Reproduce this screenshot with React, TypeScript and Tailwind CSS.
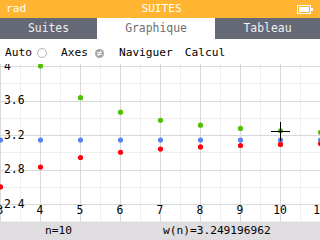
const MONO = { fontFamily: '"DejaVu Sans Mono", "Liberation Mono", monospace' }

const TOP = 64
const yOf = (v: number) => 135 - (v - 3.2) * 86.25 - TOP
const xOf = (n: number) => (n - 3) * 40

const NS = [3, 4, 5, 6, 7, 8, 9, 10, 11]

function Graph() {
  const minorX = [20, 60, 100, 140, 180, 220, 260, 300]
  const majorX = [0, 40, 80, 120, 160, 200, 240, 280, 320]
  const majorY = [4, 3.6, 3.2, 2.8, 2.4]
  const minorY = [3.8, 3.4, 3.0, 2.6, 2.2]
  return (
    <svg width={320} height={158} className="block" style={MONO}>
      {minorX.map((x) => (
        <line key={'mx' + x} x1={x + 0.5} x2={x + 0.5} y1={0} y2={158} stroke="#efefef" />
      ))}
      {minorY.map((v) => (
        <line key={'my' + v} x1={0} x2={320} y1={Math.round(yOf(v)) + 0.5} y2={Math.round(yOf(v)) + 0.5} stroke="#efefef" />
      ))}
      {majorX.map((x) => (
        <line key={'Mx' + x} x1={x + 0.5} x2={x + 0.5} y1={0} y2={158} stroke="#d9d9d9" />
      ))}
      {majorY.map((v) => (
        <line key={'My' + v} x1={0} x2={320} y1={Math.round(yOf(v)) + 0.5} y2={Math.round(yOf(v)) + 0.5} stroke="#d9d9d9" />
      ))}
      {majorY.map((v) => (
        <text key={'ly' + v} x={4} y={yOf(v)} dominantBaseline="middle" fontSize={11.4} fill="#000">
          {v === 4 ? '4' : v.toFixed(1)}
        </text>
      ))}
      {NS.map((n) => (
        <text key={'lx' + n} x={xOf(n)} y={146} dominantBaseline="middle" textAnchor="middle" fontSize={11.4} fill="#000">
          {n}
        </text>
      ))}
      {NS.map((n) => (
        <g key={'p' + n}>
          <circle cx={xOf(n) + 0.5} cy={yOf(n * Math.tan(Math.PI / n))} r={2.6} fill="#50c102" />
          <circle cx={xOf(n) + 0.5} cy={yOf(Math.PI)} r={2.6} fill="#5b82f2" />
          <circle cx={xOf(n) + 0.5} cy={yOf(n * Math.sin(Math.PI / n))} r={2.6} fill="#ff000c" />
        </g>
      ))}
      {/* cursor */}
      <line x1={271} x2={290} y1={131.5 - TOP} y2={131.5 - TOP} stroke="#000" />
      <line x1={280.5} x2={280.5} y1={122 - TOP} y2={141 - TOP} stroke="#000" />
    </svg>
  )
}

export default function App() {
  return (
    <div className="flex h-[240px] w-[320px] flex-col overflow-hidden bg-white text-[11.2px] leading-none" style={MONO}>
      {/* title bar */}
      <div className="flex h-[18px] items-center bg-[#ffb531] px-[6px] text-white">
        <span>rad</span>
        <span className="flex-1 text-center">SUITES</span>
        <svg width={16} height={9} className="mr-[1px]">
          <rect x={0.5} y={0.5} width={13} height={8} fill="none" stroke="#fff" />
          <rect x={2} y={2} width={10} height={5} fill="#fff" />
          <rect x={14} y={3} width={2} height={3} fill="#fff" />
        </svg>
      </div>

      {/* tabs */}
      <div className="flex h-[21px] text-[11.4px]">
        <div className="flex w-[97px] items-center justify-center bg-[#656975] text-[#f0f0f0]">Suites</div>
        <div className="flex w-[118px] items-center justify-center bg-white text-[#6f6f6f]">Graphique</div>
        <div className="flex flex-1 items-center justify-center bg-[#656975] text-[#f0f0f0]">Tableau</div>
      </div>

      {/* toolbar */}
      <div className="flex h-[25px] items-center pl-[5px] pt-[3px] text-black">
        <span>Auto</span>
        <span className="ml-[5px] h-[10px] w-[10px] rounded-full border border-[#b5b5b5] bg-white" />
        <span className="ml-[14px]">Axes</span>
        <svg width={9} height={9} className="ml-[7px]">
          <circle cx={4.5} cy={4.5} r={4.5} fill="#a5a5a5" />
          <line x1={2} x2={7} y1={3.5} y2={3.5} stroke="#fff" />
          <line x1={2} x2={7} y1={5.5} y2={5.5} stroke="#fff" />
          <line x1={3} x2={6} y1={7} y2={2} stroke="#fff" />
        </svg>
        <span className="ml-[15px]">Naviguer</span>
        <span className="ml-[12px]">Calcul</span>
      </div>

      {/* graph */}
      <div className="h-[158px] overflow-hidden">
        <Graph />
      </div>

      {/* banner */}
      <div className="flex h-[18px] items-center bg-[#e0dde0] text-black">
        <span className="w-[163px] pl-[45px]">n=10</span>
        <span>w(n)=3.249196962</span>
      </div>
    </div>
  )
}
